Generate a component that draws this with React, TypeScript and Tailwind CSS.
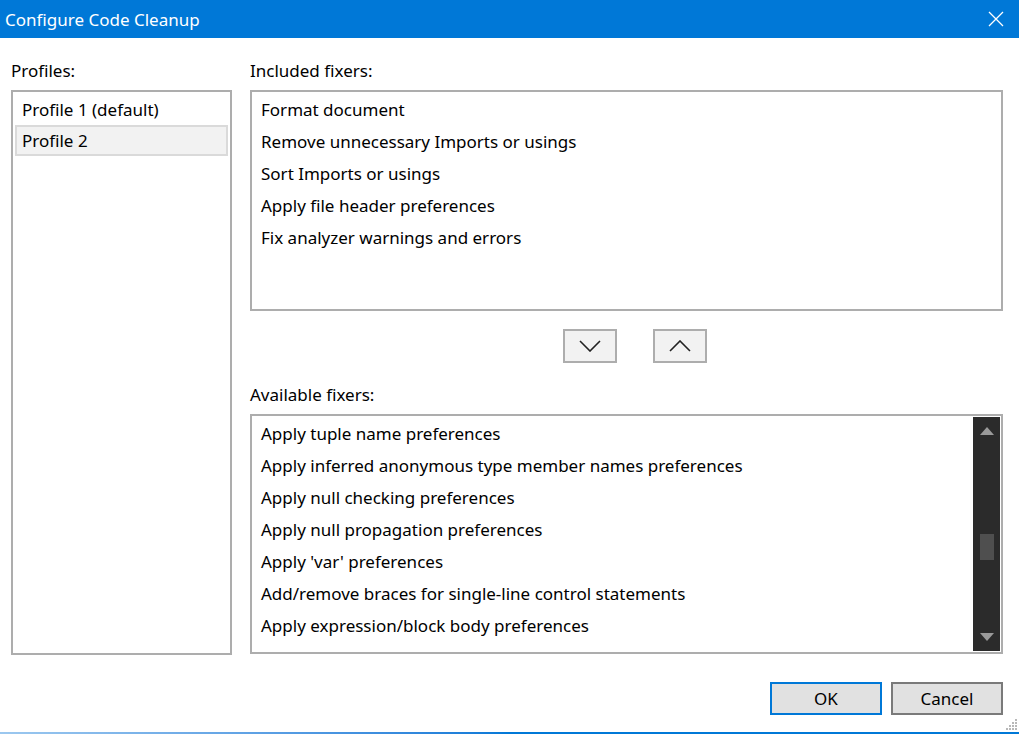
import React from 'react';

const font = { fontFamily: '"Noto Sans", "Open Sans", sans-serif' };

const included = [
  'Format document',
  'Remove unnecessary Imports or usings',
  'Sort Imports or usings',
  'Apply file header preferences',
  'Fix analyzer warnings and errors',
];

const available = [
  'Apply tuple name preferences',
  'Apply inferred anonymous type member names preferences',
  'Apply null checking preferences',
  'Apply null propagation preferences',
  "Apply 'var' preferences",
  'Add/remove braces for single-line control statements',
  'Apply expression/block body preferences',
];

const Chevron = ({ up }: { up?: boolean }) => (
  <svg width="22" height="12" viewBox="0 0 22 12" className="text-[#222]">
    <polyline
      points={up ? '1,11 11,1 21,11' : '1,1 11,11 21,1'}
      fill="none"
      stroke="currentColor"
      strokeWidth="1.6"
    />
  </svg>
);

export default function App() {
  return (
    <div
      className="w-[1019px] h-[734px] bg-white flex flex-col relative overflow-hidden text-[17px] text-black"
      style={font}
    >
      {/* Title bar */}
      <div className="h-[38px] bg-[#0078d7] flex items-center justify-between pl-[5px] pr-[15px] text-white">
        <span className="text-[17px] leading-none">Configure Code Cleanup</span>
        <svg width="16" height="16" viewBox="0 0 16 16">
          <path d="M1 1 L15 15 M15 1 L1 15" stroke="white" strokeWidth="1.3" fill="none" />
        </svg>
      </div>

      {/* Body */}
      <div className="flex pl-[11px] pr-[16px] pt-[21px] gap-[18px]">
        {/* Profiles */}
        <div className="w-[221px] flex flex-col">
          <div className="leading-[24px] mb-[7px]">Profiles:</div>
          <div className="h-[565px] border-2 border-[#adadad] p-[2px]">
            <div className="h-[31px] flex items-center px-[7px]">Profile 1 (default)</div>
            <div className="h-[31px] flex items-center px-[5px] bg-[#f2f2f2] border-2 border-[#dadada]">
              Profile 2
            </div>
          </div>
        </div>

        {/* Fixers */}
        <div className="w-[753px] flex flex-col">
          <div className="leading-[24px] mb-[7px]">Included fixers:</div>
          <div className="h-[221px] border-2 border-[#adadad] p-[2px]">
            {included.map((f) => (
              <div key={f} className="h-[32px] flex items-center px-[7px]">
                {f}
              </div>
            ))}
          </div>

          <div className="flex gap-[36px] pl-[313px] mt-[18px]">
            <button className="w-[54px] h-[34px] border-2 border-[#adadad] bg-[#f2f2f2] flex items-center justify-center">
              <Chevron />
            </button>
            <button className="w-[54px] h-[34px] border-2 border-[#adadad] bg-[#f2f2f2] flex items-center justify-center">
              <Chevron up />
            </button>
          </div>

          <div className="leading-[24px] mt-[20px] mb-[7px]">Available fixers:</div>
          <div className="h-[240px] border-2 border-[#adadad] flex">
            <div className="flex-1 pt-[2px] pl-[2px]">
              {available.map((f) => (
                <div key={f} className="h-[32px] flex items-center px-[7px]">
                  {f}
                </div>
              ))}
            </div>
            <div className="w-[27px] my-[1px] mr-[1px] bg-[#2b2b2b] flex flex-col items-center justify-between py-[10px]">
              <svg width="14" height="8" viewBox="0 0 14 8">
                <polygon points="0,8 7,0 14,8" fill="#9a9a9a" />
              </svg>
              <div className="w-[14px] h-[26px] bg-[#4f4f4f] mt-[99px]" />
              <div className="flex-1" />
              <svg width="14" height="8" viewBox="0 0 14 8">
                <polygon points="0,0 14,0 7,8" fill="#9a9a9a" />
              </svg>
            </div>
          </div>
        </div>
      </div>

      {/* Footer buttons */}
      <div className="flex justify-end gap-[9px] pr-[16px] mt-[27px]">
        <button className="w-[112px] h-[33px] border-2 border-[#0078d7] bg-[#e1e1e1] flex items-center justify-center">
          OK
        </button>
        <button className="w-[112px] h-[33px] border-2 border-[#7a7a7a] bg-[#e1e1e1] flex items-center justify-center">
          Cancel
        </button>
      </div>

      {/* Resize grip */}
      <svg className="absolute right-[2px] bottom-[4px]" width="12" height="12" viewBox="0 0 12 12">
        {[
          [10, 1], [10, 4], [7, 4], [10, 7], [7, 7], [4, 7], [10, 10], [7, 10], [4, 10], [1, 10],
        ].map(([x, y], i) => (
          <rect key={i} x={x} y={y} width="2" height="2" fill="#b8b8b8" />
        ))}
      </svg>

      <div className="absolute left-0 right-0 bottom-0 h-[2px] bg-gradient-to-r from-[#9cc8ef] to-[#0078d7] via-[#0078d7]" />
    </div>
  );
}
